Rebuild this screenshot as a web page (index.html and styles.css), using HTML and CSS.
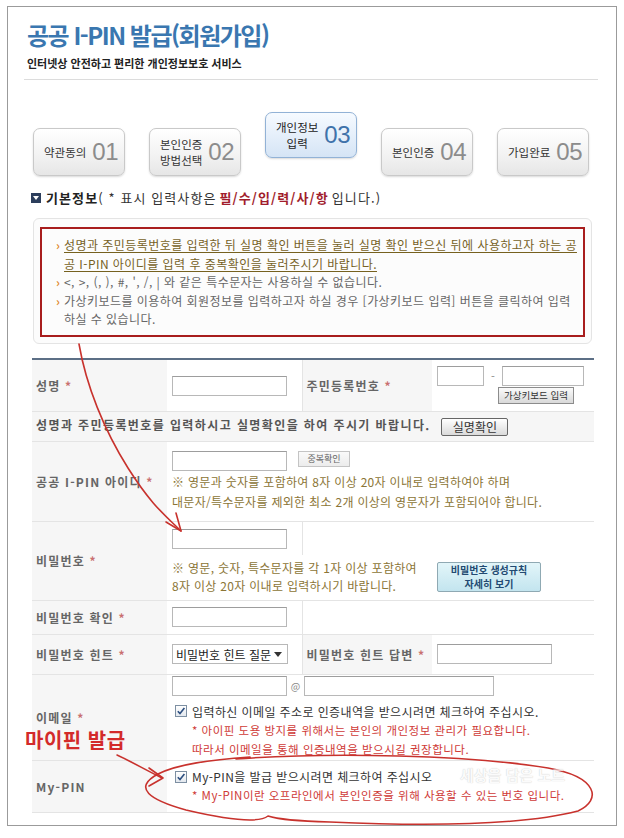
FILE: index.html
```html
<!DOCTYPE html>
<html lang="ko">
<head>
  <meta charset="UTF-8">
  <meta name="viewport" content="width=device-width, initial-scale=1.0">
  <title>공공 I-PIN 발급(회원가입)</title>
  <link rel="stylesheet" href="styles.css">
</head>
<body>
  <div class="page">
    <div class="head">
      <h1 class="title">공공 I-PIN 발급(회원가입)</h1>
      <p class="subtitle">인터넷상 안전하고 편리한 개인정보보호 서비스</p>
    </div>

    <ol class="steps">
      <li class="step"><span class="step-name">약관동의</span><span class="step-no">01</span></li>
      <li class="step"><span class="step-name">본인인증<br>방법선택</span><span class="step-no">02</span></li>
      <li class="step on"><span class="step-name">개인정보<br>입력</span><span class="step-no">03</span></li>
      <li class="step"><span class="step-name">본인인증</span><span class="step-no">04</span></li>
      <li class="step"><span class="step-name">가입완료</span><span class="step-no">05</span></li>
    </ol>

    <h2 class="section-title"><span class="sq"></span><b>기본정보</b>( * 표시 입력사항은 <em>필/수/입/력/사/항</em> 입니다.)</h2>

    <div class="notice">
      <ul class="notice-inner">
        <li class="hl">성명과 주민등록번호를 입력한 뒤 실명 확인 버튼을 눌러 실명 확인 받으신 뒤에 사용하고자 하는 공<br>공 I-PIN 아이디를 입력 후 중복확인을 눌러주시기 바랍니다.</li>
        <li>&lt;, &gt;, (, ), #, ', /, | 와 같은 특수문자는 사용하실 수 없습니다.</li>
        <li>가상키보드를 이용하여 회원정보를 입력하고자 하실 경우 [가상키보드 입력] 버튼을 클릭하여 입력<br>하실 수 있습니다.</li>
      </ul>
    </div>

    <table class="form">
      <colgroup>
        <col style="width:135px">
        <col style="width:135px">
        <col style="width:130px">
        <col style="width:162px">
      </colgroup>
      <tr class="r-name">
        <th>성명 <i>*</i></th>
        <td class="split"><input class="field" type="text"></td>
        <th>주민등록번호 <i>*</i></th>
        <td>
          <div class="ssn">
            <input class="field short" type="text"><span class="dash">-</span><input class="field mid" type="text">
          </div>
          <button class="btn kbd" type="button">가상키보드 입력</button>
        </td>
      </tr>
      <tr class="r-real">
        <td colspan="4" class="gray">성명과 주민등록번호를 입력하시고 실명확인을 하여 주시기 바랍니다. <button class="btn real" type="button">실명확인</button></td>
      </tr>
      <tr class="r-id">
        <th>공공 I-PIN 아이디 <i>*</i></th>
        <td colspan="3">
          <div class="line">
            <input class="field" type="text"><button class="btn dup" type="button">중복확인</button>
          </div>
          <p class="hint">※ 영문과 숫자를 포함하여 8자 이상 20자 이내로 입력하여야 하며<br>대문자/특수문자를 제외한 최소 2개 이상의 영문자가 포함되어야 합니다.</p>
        </td>
      </tr>
      <tr class="r-pw1">
        <th rowspan="2">비밀번호 <i>*</i></th>
        <td class="split"><input class="field" type="password"></td>
        <td colspan="2"></td>
      </tr>
      <tr class="r-pw2">
        <td colspan="3">
          <div class="pw-help">
            <p class="hint">※ 영문, 숫자, 특수문자를 각 1자 이상 포함하여<br>8자 이상 20자 이내로 입력하시기 바랍니다.</p>
            <button class="btn rule" type="button"><span>비밀번호 생성규칙</span><span>자세히 보기</span></button>
          </div>
        </td>
      </tr>
      <tr class="r-pwc">
        <th>비밀번호 확인 <i>*</i></th>
        <td class="split"><input class="field" type="password"></td>
        <td colspan="2"></td>
      </tr>
      <tr class="r-hint">
        <th>비밀번호 힌트 <i>*</i></th>
        <td class="split"><div class="select"><span>비밀번호 힌트 질문</span><span class="caret"></span></div></td>
        <th>비밀번호 힌트 답변 <i>*</i></th>
        <td><input class="field" type="text"></td>
      </tr>
      <tr class="r-mail">
        <th>이메일 <i>*</i></th>
        <td colspan="3">
          <div class="line mail">
            <input class="field" type="text"><span class="at">@</span><input class="field long" type="text">
          </div>
          <div class="check"><span class="box"><svg width="10" height="10" viewBox="0 0 10 10"><path d="M1.8 5.2 L4 7.6 L8.4 2" fill="none" stroke="#2d4f80" stroke-width="1.6"/></svg></span>입력하신 이메일 주소로 인증내역을 받으시려면 체크하여 주십시오.</div>
          <p class="warn">* 아이핀 도용 방지를 위해서는 본인의 개인정보 관리가 필요합니다.<br>따라서 이메일을 통해 인증내역을 받으시길 권장합니다.</p>
        </td>
      </tr>
      <tr class="r-mypin">
        <th>My-PIN</th>
        <td colspan="3">
          <div class="check"><span class="box"><svg width="10" height="10" viewBox="0 0 10 10"><path d="M1.8 5.2 L4 7.6 L8.4 2" fill="none" stroke="#2d4f80" stroke-width="1.6"/></svg></span>My-PIN을 발급 받으시려면 체크하여 주십시오</div>
          <p class="warn">* My-PIN이란 오프라인에서 본인인증을 위해 사용할 수 있는 번호 입니다.</p>
        </td>
      </tr>
    </table>
  </div>

  <!-- 손으로 그린 표시 -->
  <svg class="marks" width="624" height="838" viewBox="0 0 624 838">
    <g fill="none" stroke="#c8322d" stroke-width="1.6" stroke-linecap="round" stroke-linejoin="round">
      <path d="M79 344 C 86 385, 104 430, 128 468 S 166 516, 181 531"/>
      <path d="M166 522 L181 531 L176 513"/>
      <path d="M117 755 C 130 761, 146 770, 162 778"/>
      <path d="M149 768 L163 778 L149 786"/>
      <path d="M236 759 C 330 752, 470 755, 548 768 C 598 777, 602 800, 578 811 C 520 826, 420 826, 330 822 C 300 821, 280 820, 268 816 C 258 824, 220 818, 186 810 C 150 800, 132 788, 158 774 C 178 764, 210 760, 250 757"/>
    </g>
  </svg>
  <div class="callout">마이핀 발급</div>
  <div class="watermark">세상을 담은 노트</div>
</body>
</html>
```

FILE: styles.css
```css
* {
  box-sizing: border-box;
}

body {
  margin: 0;
  font-family: "Noto Sans CJK KR", "Noto Sans", sans-serif;
  color: #333;
  background-color: #fff;
  position: relative;
}

.page {
  margin: 6px 0 0 7px;
  width: 610px;
  height: 820px;
  border: 1px solid #9b9b9b;
  padding-top: 12px;
}

.head {
  margin: 0 18px 0 16px;
  padding: 0 0 8px 3px;
  border-bottom: 1px solid #dcdcdc;
}

.title {
  margin: 0;
  font-size: 24px;
  line-height: 32px;
  font-weight: 700;
  letter-spacing: -1.5px;
  color: #3a77b0;
}

.subtitle {
  margin: 4px 0 0;
  font-size: 11px;
  line-height: 16px;
  font-weight: 700;
  color: #222;
}

.steps {
  list-style: none;
  margin: 32px 0 0 25px;
  padding: 0;
  display: flex;
  gap: 24px;
  align-items: flex-start;
}

.step {
  width: 92px;
  height: 48px;
  margin-top: 16px;
  border: 1px solid #c9c9c9;
  border-radius: 7px;
  background: linear-gradient(#ffffff, #f3f3f3 55%, #e6e6e6);
  box-shadow: 0 1px 2px rgba(0, 0, 0, 0.15);
  display: flex;
  align-items: center;
  justify-content: space-between;
  padding: 0 6px 0 10px;
}

.step-name {
  font-size: 11.5px;
  line-height: 16px;
  color: #333;
  text-align: center;
}

.step-no {
  font-family: "Liberation Sans", Arial, sans-serif;
  font-size: 24px;
  color: #8c8c8c;
  letter-spacing: -0.5px;
}

.step.on {
  margin-top: 0;
  height: 46px;
  border-color: #92b2d6;
  background: linear-gradient(#f6faff, #e4eefa 55%, #d5e4f5);
}

.step.on .step-name {
  color: #222;
}

.step.on .step-no {
  color: #3f72aa;
}

.section-title {
  margin: 14px 0 0 23px;
  font-size: 13px;
  line-height: 16px;
  font-weight: 400;
  letter-spacing: 1.1px;
  color: #333;
  display: flex;
  align-items: center;
}

.section-title b {
  font-weight: 700;
  color: #222;
  margin-left: 5px;
}

.section-title em {
  font-style: normal;
  font-weight: 700;
  color: #a11d2c;
  margin: 0 3px;
}

.sq {
  width: 10px;
  height: 10px;
  background-color: #2c3e5c;
  display: inline-flex;
  align-items: center;
  justify-content: center;
}

.sq::after {
  content: "";
  border-left: 3px solid transparent;
  border-right: 3px solid transparent;
  border-top: 4px solid #fff;
}

.notice {
  margin: 12px 0 0 25px;
  width: 559px;
  height: 126px;
  padding: 8px 6px;
  border: 1px solid #e4e4e4;
  border-radius: 6px;
  background-color: #fcfcfc;
}

.notice-inner {
  list-style: none;
  margin: 0;
  height: 110px;
  padding: 7px 4px 0 14px;
  border: 2px solid #a81d1d;
}

.notice-inner li {
  font-size: 12px;
  line-height: 18.5px;
  letter-spacing: 0.45px;
  color: #666;
  padding-left: 8px;
  text-indent: -8px;
  white-space: nowrap;
}

.notice-inner li::before {
  content: "›";
  display: inline-block;
  width: 8px;
  text-indent: 0;
  color: #e08a2c;
  font-weight: 700;
}

.notice-inner li.hl {
  color: #76611f;
  text-decoration: underline;
  text-underline-offset: 2px;
}

.form {
  margin: 14px 0 0 24px;
  width: 562px;
  border-collapse: collapse;
  table-layout: fixed;
  border-top: 2px solid #5c6f86;
  border-bottom: 1px solid #dedede;
}

.form th {
  padding: 0 0 0 4px;
  text-align: left;
  font-size: 12px;
  font-weight: 700;
  color: #666;
  letter-spacing: 1.2px;
  background-color: #f6f6f6;
  border-bottom: 1px solid #e4e4e4;
}

.form th i {
  font-style: normal;
  color: #c97070;
}

.form td {
  padding: 0 5px;
  font-size: 12px;
  border-bottom: 1px solid #e4e4e4;
  vertical-align: middle;
}

.form td.split {
  border-right: 1px solid #e4e4e4;
}

.r-name { height: 52px; }
.r-real { height: 30px; }
.r-id { height: 80px; }
.r-pw1 { height: 34px; }
.r-pw2 { height: 45px; }
.r-pwc { height: 34px; }
.r-hint { height: 40px; }
.r-mail { height: 86px; }
.r-mypin { height: 52px; }

.form .r-pw1 td {
  border-bottom: none;
}

.form td.gray {
  background-color: #f6f6f6;
  padding-left: 4px;
  font-weight: 700;
  color: #555;
  letter-spacing: 1.4px;
  white-space: nowrap;
}

.field {
  width: 115px;
  height: 20px;
  margin: 0;
  padding: 0 3px;
  border: 1px solid #b8b8b8;
  border-top-color: #9d9d9d;
  background-color: #fff;
  vertical-align: middle;
}

.field.short { width: 47px; }
.field.mid { width: 82px; }
.field.long { width: 190px; }

.ssn {
  display: flex;
  align-items: center;
  gap: 7px;
}

.dash {
  color: #888;
  font-size: 11px;
}

.btn {
  font-family: "Noto Sans CJK KR", "Noto Sans", sans-serif;
  cursor: pointer;
  color: #333;
  padding: 0;
}

.kbd {
  display: block;
  margin: 1px 0 0 61px;
  width: 76px;
  height: 17px;
  font-size: 9.5px;
  line-height: 15px;
  border: 1px solid #8c8c8c;
  background: linear-gradient(#fbfbfb, #d9d9d9);
}

.real {
  margin-left: 6px;
  width: 67px;
  height: 18px;
  font-size: 12px;
  line-height: 16px;
  letter-spacing: 0;
  font-weight: 400;
  border: 1px solid #666;
  border-radius: 2px;
  background: linear-gradient(#ffffff, #dadada);
  vertical-align: middle;
}

.line {
  display: flex;
  align-items: center;
  gap: 11px;
}

.dup {
  width: 52px;
  height: 16px;
  font-size: 9px;
  line-height: 14px;
  color: #666;
  border: 1px solid #c4c4c4;
  background: linear-gradient(#fafafa, #ececec);
  align-self: flex-start;
}

.hint {
  margin: 1px 0 0;
  font-size: 12px;
  line-height: 20px;
  letter-spacing: 0.3px;
  color: #8b7536;
  white-space: nowrap;
}

.pw-help {
  display: flex;
  align-items: center;
}

.pw-help .hint {
  margin: 0;
  width: 265px;
  line-height: 18px;
}

.rule {
  width: 104px;
  height: 30px;
  font-size: 10px;
  font-weight: 700;
  color: #234a72;
  border: 1px solid #8fa9b3;
  border-radius: 2px;
  background: linear-gradient(#e2f5f9, #c3e5ef);
  display: flex;
  flex-direction: column;
  align-items: center;
  justify-content: center;
}

.rule span {
  display: block;
  line-height: 14px;
}

.select {
  width: 116px;
  height: 20px;
  border: 1px solid #b8b8b8;
  background-color: #fff;
  display: flex;
  align-items: center;
  justify-content: space-between;
  padding: 0 5px 0 3px;
  font-size: 12px;
  color: #222;
}

.caret {
  border-left: 4px solid transparent;
  border-right: 4px solid transparent;
  border-top: 5px solid #333;
}

.mail {
  gap: 0;
}

.at {
  width: 17px;
  text-align: center;
  font-size: 10px;
  color: #888;
}

.check {
  margin-top: 6px;
  display: flex;
  align-items: center;
  font-size: 12px;
  line-height: 19px;
  letter-spacing: 0.4px;
  color: #333;
  white-space: nowrap;
}

.box {
  width: 12px;
  height: 12px;
  margin: 0 5px 0 3px;
  border: 1px solid #7d8fa2;
  background: linear-gradient(#ffffff, #e3e8ee);
  display: inline-flex;
  align-items: center;
  justify-content: center;
}

.r-mypin .check {
  margin-top: 0;
}

.warn {
  margin: 0;
  padding-left: 20px;
  font-size: 11.5px;
  line-height: 19px;
  letter-spacing: 0.5px;
  color: #cf3a37;
  white-space: nowrap;
}

.marks {
  position: absolute;
  left: 0;
  top: 0;
  pointer-events: none;
}

.callout {
  position: absolute;
  left: 25px;
  top: 726px;
  font-size: 20px;
  line-height: 28px;
  font-weight: 700;
  color: #d32a2a;
  letter-spacing: 0.5px;
}

.watermark {
  position: absolute;
  left: 460px;
  top: 764px;
  font-size: 15px;
  font-weight: 700;
  color: #fafafa;
  text-shadow: 0 0 1px #aaa;
  opacity: 0.7;
}
```
